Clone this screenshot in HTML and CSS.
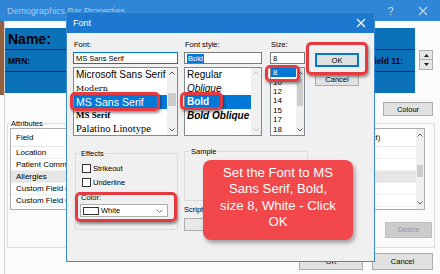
FILE: index.html
```html
<!DOCTYPE html>
<html>
<head>
<meta charset="utf-8">
<link rel="stylesheet" href="styles.css">
</head>
<body>
<div class="win">
  <div class="win-title">
    <span class="win-title-text">Demographics Bar Properties</span>
    <span class="tb-help">?</span>
    <span class="tb-close"><svg width="10" height="10" viewBox="0 0 10 10"><path d="M1 1L9 9M9 1L1 9" stroke="#c4d9f0" stroke-width="1.1"/></svg></span>
  </div>
  <div class="win-main">
    <div class="desk-strip"></div>
    <div class="client">
      <div class="bar-row">
        <div class="demo-bar">
          <div class="demo-sec sec-name"><span>Name:</span></div>
          <div class="demo-sec sec-mrn"><span>MRN:</span><span>Field 11:</span></div>
          <div class="demo-sec sec-empty"></div>
        </div>
        <div class="spinner">
          <div class="spin-btn"><svg width="5" height="3" viewBox="0 0 5 3"><path d="M0 3L2.5 0L5 3Z" fill="#222"/></svg></div>
          <div class="spin-btn"><svg width="5" height="3" viewBox="0 0 5 3"><path d="M0 0L2.5 3L5 0Z" fill="#222"/></svg></div>
        </div>
      </div>
      <div class="colour-row"><div class="btn colour-btn">Colour</div></div>
      <fieldset class="attr-group">
        <legend>Attributes</legend>
        <div class="attr-list">
          <div class="attr-rows">
            <div class="attr-head"><span>Field</span><span class="col2">Label (Text)</span></div>
            <div class="attr-row">Location</div>
            <div class="attr-row">Patient Comments</div>
            <div class="attr-row sel">Allergies</div>
            <div class="attr-row">Custom Field 01</div>
            <div class="attr-row">Custom Field 02</div>
            <div class="attr-row attr-row-last">Custom Field 03</div>
          </div>
          <div class="sb sb-attr">
            <div class="sb-arr"><svg width="6" height="4" viewBox="0 0 6 4"><polyline points="0.5,3.5 3,1 5.5,3.5" fill="none" stroke="#555" stroke-width="1"/></svg></div>
            <div class="sb-track"><div class="sb-thumb"></div></div>
            <div class="sb-arr"><svg width="6" height="4" viewBox="0 0 6 4"><polyline points="0.5,0.5 3,3 5.5,0.5" fill="none" stroke="#555" stroke-width="1"/></svg></div>
          </div>
        </div>
        <div class="del-row"><div class="btn btn-dis">Delete</div></div>
      </fieldset>
      <div class="foot"><div class="btn foot-ok">OK</div><div class="btn foot-cancel">Cancel</div></div>
    </div>
  </div>
</div>

<div class="fontdlg">
  <div class="fd-title"><span class="fd-title-text">Font</span><span class="fd-close"><svg width="10" height="10" viewBox="0 0 10 10"><path d="M1 1L9 9M9 1L1 9" stroke="#fff" stroke-width="1.1"/></svg></span></div>
  <div class="fd-body">
    <div class="fd-top">
      <div class="col col-font">
        <div class="lbl">Font:</div>
        <div class="inp inp-focus">MS Sans Serif</div>
        <div class="lst">
          <div class="lst-items">
            <div class="it it-font f-mss">Microsoft Sans Serif</div>
            <div class="it it-font f-modern">Modern</div>
            <div class="it it-font f-mssans sel">MS Sans Serif</div>
            <div class="it it-font f-msserif">MS Serif</div>
            <div class="it it-font f-pal">Palatino Linotype</div>
          </div>
          <div class="sb sb-font">
            <div class="sb-arr"><svg width="6" height="4" viewBox="0 0 6 4"><polyline points="0.5,3.5 3,1 5.5,3.5" fill="none" stroke="#555" stroke-width="1"/></svg></div>
            <div class="sb-track"><div class="sb-thumb"></div></div>
            <div class="sb-arr"><svg width="6" height="4" viewBox="0 0 6 4"><polyline points="0.5,0.5 3,3 5.5,0.5" fill="none" stroke="#555" stroke-width="1"/></svg></div>
          </div>
        </div>
      </div>
      <div class="col col-style">
        <div class="lbl">Font style:</div>
        <div class="inp"><span class="txt-sel">Bold</span></div>
        <div class="lst">
          <div class="lst-items">
            <div class="it it-font">Regular</div>
            <div class="it it-font s-obl">Oblique</div>
            <div class="it it-font s-bold sel">Bold</div>
            <div class="it it-font s-bobl">Bold Oblique</div>
          </div>
          <div class="sb sb-style">
            <div class="sb-arr"><svg width="6" height="4" viewBox="0 0 6 4"><polyline points="0.5,3.5 3,1 5.5,3.5" fill="none" stroke="#c2c2c2" stroke-width="1"/></svg></div>
            <div class="sb-track"></div>
            <div class="sb-arr"><svg width="6" height="4" viewBox="0 0 6 4"><polyline points="0.5,0.5 3,3 5.5,0.5" fill="none" stroke="#c2c2c2" stroke-width="1"/></svg></div>
          </div>
        </div>
      </div>
      <div class="col col-size">
        <div class="lbl">Size:</div>
        <div class="inp">8</div>
        <div class="lst">
          <div class="lst-items">
            <div class="it it-size sel">8</div>
            <div class="it it-size">10</div>
            <div class="it it-size">12</div>
            <div class="it it-size">14</div>
            <div class="it it-size">15</div>
            <div class="it it-size">17</div>
            <div class="it it-size">18</div>
          </div>
          <div class="sb sb-size">
            <div class="sb-arr"><svg width="6" height="4" viewBox="0 0 6 4"><polyline points="0.5,3.5 3,1 5.5,3.5" fill="none" stroke="#555" stroke-width="1"/></svg></div>
            <div class="sb-track"><div class="sb-thumb"></div></div>
            <div class="sb-arr"><svg width="6" height="4" viewBox="0 0 6 4"><polyline points="0.5,0.5 3,3 5.5,0.5" fill="none" stroke="#555" stroke-width="1"/></svg></div>
          </div>
        </div>
      </div>
      <div class="col col-btns">
        <div class="btn btn-default">OK</div>
        <div class="btn btn-cancel">Cancel</div>
      </div>
    </div>
    <div class="fd-bottom">
      <fieldset class="grp grp-effects">
        <legend>Effects</legend>
        <div class="chk-row"><span class="chk"></span><span>Strikeout</span></div>
        <div class="chk-row chk-row2"><span class="chk"></span><span>Underline</span></div>
        <div class="lbl lbl-color">Color:</div>
        <div class="combo combo-color">
          <span class="swatch"></span><span class="combo-text">White</span>
          <svg class="combo-chev" width="7" height="4" viewBox="0 0 7 4"><polyline points="0.5,0.5 3.5,3.5 6.5,0.5" fill="none" stroke="#777" stroke-width="1"/></svg>
        </div>
      </fieldset>
      <div class="col-sample">
        <fieldset class="grp grp-sample"><legend>Sample</legend></fieldset>
        <div class="lbl lbl-script">Script:</div>
        <div class="combo combo-script"></div>
      </div>
    </div>
  </div>
</div>

<div class="hl hl-font"></div>
<div class="hl hl-style"></div>
<div class="hl hl-size"></div>
<div class="hl hl-ok"></div>
<div class="hl hl-color"></div>

<div class="callout">Set the Font to MS<br>Sans Serif, Bold,<br>size 8, White - Click<br>OK</div>
</body>
</html>
```

FILE: styles.css
```css
* { box-sizing: border-box; }
html, body { margin: 0; padding: 0; }
body {
  width: 440px; height: 274px; overflow: hidden; position: relative;
  background: #fbfbfb;
  font-family: "Liberation Sans", Arial, sans-serif;
  font-size: 7.5px; color: #000;
}
svg { display: block; }

/* ---------- outer window ---------- */
.win { width: 440px; height: 274px; display: flex; flex-direction: column; background: #fbfbfb; }
.win-title {
  height: 21px; flex: none; background: #2f86d6; display: flex; align-items: center;
  padding-left: 7px; color: #a9cbef; font-size: 9px;
}
.win-title-text { flex: 1; }
.tb-help { width: 31px; text-align: center; font-size: 11px; color: #c4d9f0; }
.tb-close { width: 34px; display: flex; justify-content: center; }
.win-main { flex: 1; display: flex; }
.desk-strip { width: 5px; height: 74px; background: #93603f; flex: none; }
.client { flex: 1; padding: 7px 7px 0 0; display: flex; flex-direction: column; border-left: 1px solid #d4d4d4; margin-left: -1px; }

.bar-row { display: flex; align-items: flex-start; }
.demo-bar { width: 410px; height: 65px; background: #0b72b9; display: flex; flex-direction: column; }
.demo-sec { height: 22px; display: flex; align-items: center; padding-left: 3px; border-bottom: 1px solid #17283a; }
.sec-empty { border-bottom: none; height: 21px; }
.sec-name { font-size: 14px; font-weight: bold; }
.sec-mrn { font-size: 8.5px; font-weight: bold; justify-content: space-between; padding-right: 12px; }
.spinner { margin-left: 4px; margin-top: 22px; width: 14px; display: flex; flex-direction: column; }
.spin-btn { height: 10px; border: 1px solid #adadad; background: #e6e6e6; display: flex; align-items: center; justify-content: center; }
.spin-btn + .spin-btn { border-top: none; }

.btn {
  background: #e1e1e1; border: 1px solid #adadad; display: flex; align-items: center; justify-content: center;
  font-size: 7.5px; color: #000;
}
.colour-row { display: flex; justify-content: flex-end; margin-top: 9px; }
.colour-btn { width: 50px; height: 14px; }

.attr-group {
  margin: 2.5px -2px 0 2px; padding: 0 2px 0 2px; min-width: 0;
  border: 1px solid #dcdcdc; height: 129.5px;
}
.attr-group legend { font-size: 7.5px; line-height: 9px; padding: 0 1px; margin-left: 0; }
.attr-list { width: 415px; height: 82px; border: 1px solid #abadb3; background: #fff; display: flex; }
.attr-rows { flex: 1; overflow: hidden; font-size: 8px; }
.attr-head { height: 18px; display: flex; align-items: center; padding-left: 5px; padding-right: 35.5px; justify-content: space-between; border-bottom: 1px solid #e5e5e5; }
.attr-row { height: 12px; display: flex; align-items: center; padding-left: 5px; border-bottom: 1px solid #f0f0f0; }
.attr-row-last { height: 3px; overflow: hidden; align-items: flex-start; }
.attr-row.sel { background: #e5e5e5; }
.sb { display: flex; flex-direction: column; background: #f0f0f0; flex: none; }
.sb-arr { flex: none; display: flex; align-items: center; justify-content: center; }
.sb-track { flex: 1; }
.sb-thumb { background: #cdcdcd; margin: 0 1px; }
.sb-attr { width: 8px; }
.sb-attr .sb-arr { height: 12px; }
.sb-attr .sb-thumb { margin-top: 24px; height: 12px; }
.del-row { display: flex; justify-content: flex-end; margin-top: 12px; }
.btn-dis { width: 47px; height: 16px; background: #cccccc; border-color: #bfbfbf; color: #9a9a9a; }
.foot { display: flex; justify-content: flex-end; gap: 9px; margin-top: 5px; }
.foot-ok { width: 64px; height: 17px; }
.foot-cancel { width: 61px; height: 17px; }

/* ---------- font dialog ---------- */
.fontdlg {
  position: absolute; left: 66px; top: 12px; width: 309px; height: 250px;
  border: 1px solid #3a8ad6; background: #f0f0f0; display: flex; flex-direction: column;
}
.fd-title { height: 20px; flex: none; background: #1c78cf; color: #fff; display: flex; align-items: center; padding-left: 6px; font-size: 9px; }
.fd-title-text { flex: 1; }
.fd-close { width: 26px; display: flex; justify-content: center; }
.fd-body { padding: 6.5px 0 0 6px; }
.fd-top { display: flex; align-items: flex-start; }
.col { display: flex; flex-direction: column; }
.col-font { width: 105px; }
.col-style { width: 78px; margin-left: 6px; }
.col-size { width: 35px; margin-left: 8px; }
.col-btns { width: 44px; margin-left: 10px; padding-top: 13.5px; }
.lbl { line-height: 9px; height: 9px; padding-left: 1px; }
.inp { height: 12px; margin-top: 3.5px; background: #fff; border: 1px solid #7a7a7a; display: flex; align-items: center; padding-left: 2px; }
.inp-focus { border-color: #0078d7; }
.txt-sel { background: #0078d7; color: #fff; padding: 0 1px; }
.lst { height: 69px; margin-top: 3px; background: #fff; border: 1px solid #828790; display: flex; }
.lst-items { flex: 1; overflow: hidden; }
.it { display: flex; align-items: center; white-space: nowrap; overflow: hidden; }
.it-font { height: 13.5px; padding-left: 2px; font-size: 10px; }
.it.sel { background: #0078d7; color: #fff; }
.f-modern { font-family: "DejaVu Serif", serif; font-size: 8px; }
.f-mssans { font-size: 10.6px; }
.f-msserif { font-family: "Liberation Serif", serif; font-size: 9px; font-weight: bold; }
.f-pal { font-family: "Liberation Serif", serif; font-size: 10.5px; }
.s-obl { font-style: italic; }
.s-bold { font-weight: bold; }
.s-bobl { font-weight: bold; font-style: italic; }
.it-size { height: 9.4px; padding-left: 2px; font-size: 8px; }
.sb-font, .sb-style { width: 10px; }
.sb-font .sb-arr, .sb-style .sb-arr { height: 10px; }
.sb-font .sb-thumb { margin-top: 15px; height: 13px; }
.sb-size { width: 8px; }
.sb-size .sb-arr { height: 10px; }
.sb-size .sb-thumb { margin-top: 1px; height: 27px; }
.btn-default { height: 14px; border: 1px solid #0078d7; box-shadow: inset 0 0 0 1px #0078d7; }
.btn-cancel { height: 14px; margin-top: 5px; }

.fd-bottom { display: flex; align-items: flex-start; margin-top: 12.5px; }
.grp { margin: 0; min-width: 0; border: 1px solid #dcdcdc; }
.grp legend { line-height: 9px; padding: 0 1px; font-size: 7.5px; }
.grp-effects { width: 103px; height: 81.5px; margin-left: 2px; padding: 5px 6px 0 6px; }
.grp-effects legend { margin-left: -2px; }
.chk-row { display: flex; align-items: center; height: 11px; gap: 2px; }
.chk-row2 { margin-top: 3px; }
.chk { width: 9px; height: 9px; border: 1px solid #333; background: #fff; }
.lbl-color { margin-top: 5px; margin-left: -2px; }
.combo { height: 13px; border: 1px solid #adadad; background: #fff; }
.combo-color { margin-top: 2.5px; margin-left: -2px; width: 88px; display: flex; align-items: center; padding: 0 4px 0 2px; }
.swatch { width: 16px; height: 8px; border: 1px solid #333; background: #fff; flex: none; }
.combo-text { margin-left: 2px; flex: 1; }
.col-sample { margin-left: 6px; width: 124px; margin-top: -2px; display: flex; flex-direction: column; }
.grp-sample { height: 54.5px; padding: 0 6px; }
.grp-sample legend { margin-left: -1px; }
.lbl-script { margin-top: 4px; padding-left: 0; }
.combo-script { margin-top: 3.5px; background: #e8e8e8; }

/* ---------- annotations ---------- */
.hl {
  position: absolute; border: 3px solid #e63a40; border-radius: 5px;
  box-shadow: 1px 2px 3px rgba(0,0,0,0.45);
}
.hl-font { left: 70px; top: 92px; width: 90px; height: 19px; }
.hl-style { left: 180px; top: 92px; width: 43px; height: 18px; }
.hl-size { left: 265px; top: 65px; width: 35px; height: 17px; }
.hl-ok { left: 306px; top: 42px; width: 62px; height: 33px; }
.hl-color { left: 75px; top: 192px; width: 102px; height: 30px; }

.callout {
  position: absolute; left: 203px; top: 160px; width: 150px; height: 80px;
  background: #f2474b; border-radius: 8px; box-shadow: 2px 3px 4px rgba(0,0,0,0.35);
  color: #fff; font-size: 13.2px; line-height: 16.5px; text-align: center; padding-top: 4.5px;
}
```
